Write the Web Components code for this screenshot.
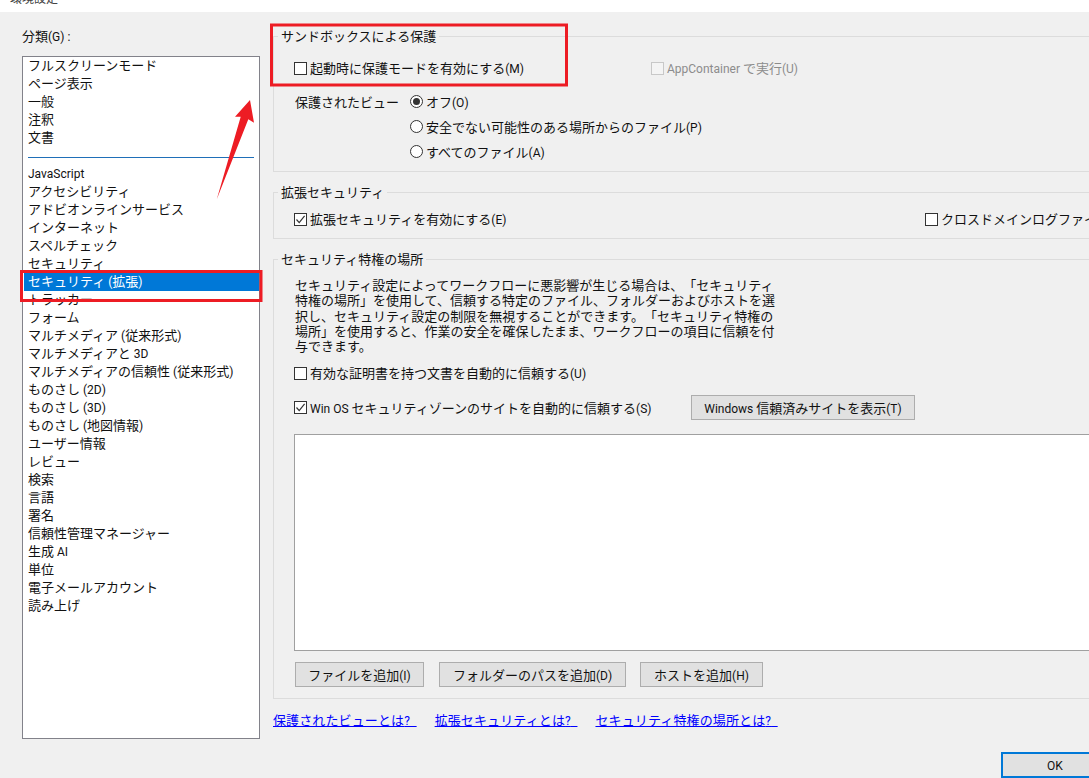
<!DOCTYPE html>
<html lang="ja">
<head>
<meta charset="utf-8">
<title>環境設定</title>
<style>
  html, body {
    margin: 0;
    height: 100%;
    overflow: hidden;
    background: #f0f0f0;
    color: #111;
    font: 13px/18px "Noto Sans CJK JP", sans-serif;
    text-spacing-trim: space-all;
  }
</style>
</head>
<body>

<pref-window heading="環境設定">
  <category-list label="分類(G) :" slot="side"></category-list>

  <group-box heading="サンドボックスによる保護" height="145">
    <div style="display:flex;margin-top:14px;height:18px">
      <check-box style="width:357px">起動時に保護モードを有効にする(M)</check-box>
      <check-box disabled>AppContainer で実行(U)</check-box>
    </div>
    <div style="display:flex;margin-top:16px">
      <span style="width:115px">保護されたビュー</span>
      <div style="display:grid;grid-auto-rows:25px;margin-top:-4px;align-items:center">
        <radio-button checked>オフ(O)</radio-button>
        <radio-button>安全でない可能性のある場所からのファイル(P)</radio-button>
        <radio-button>すべてのファイル(A)</radio-button>
      </div>
    </div>
  </group-box>

  <group-box heading="拡張セキュリティ" height="56">
    <div style="display:flex;margin-top:9px;height:18px">
      <check-box checked style="width:631px">拡張セキュリティを有効にする(E)</check-box>
      <check-box>クロスドメインログファイルを作成</check-box>
    </div>
  </group-box>

  <group-box heading="セキュリティ特権の場所" height="449">
    <div style="margin-top:9px;line-height:15.3px;white-space:nowrap">
      セキュリティ設定によってワークフローに悪影響が生じる場合は、「セキュリティ<br>
      特権の場所」を使用して、信頼する特定のファイル、フォルダーおよびホストを選<br>
      択し、セキュリティ設定の制限を無視することができます。「セキュリティ特権の<br>
      場所」を使用すると、作業の安全を確保したまま、ワークフローの項目に信頼を付<br>
      与できます。
    </div>
    <check-box style="margin-top:11px">有効な証明書を持つ文書を自動的に信頼する(U)</check-box>
    <div style="display:flex;align-items:center;margin-top:13px;height:25px">
      <check-box checked style="width:396px">Win OS セキュリティゾーンのサイトを自動的に信頼する(S)</check-box>
      <push-button width="224">Windows 信頼済みサイトを表示(T)</push-button>
    </div>
    <div style="height:215px;margin:14px 0 11px -1px;background:#fff;border:1px solid #a0a0a0"></div>
    <div style="display:flex">
      <push-button width="129">ファイルを追加(I)</push-button>
      <push-button width="187" style="margin-left:15px">フォルダーのパスを追加(D)</push-button>
      <push-button width="123" style="margin-left:14px">ホストを追加(H)</push-button>
    </div>
  </group-box>

  <div style="display:flex;gap:18px;margin-top:12px;height:18px">
    <help-link>保護されたビューとは?&ensp;</help-link>
    <help-link>拡張セキュリティとは?&ensp;</help-link>
    <help-link>セキュリティ特権の場所とは?&ensp;</help-link>
  </div>

  <push-button slot="ok" width="108" height="26" primary>OK</push-button>

  <mark-up slot="overlay"></mark-up>
</pref-window>

<script>
const categoryItems = [
  "フルスクリーンモード", "ページ表示", "一般", "注釈", "文書", "-",
  "JavaScript", "アクセシビリティ", "アドビオンラインサービス", "インターネット",
  "スペルチェック", "セキュリティ", "セキュリティ (拡張)", "トラッカー", "フォーム",
  "マルチメディア (従来形式)", "マルチメディアと 3D", "マルチメディアの信頼性 (従来形式)",
  "ものさし (2D)", "ものさし (3D)", "ものさし (地図情報)", "ユーザー情報", "レビュー",
  "検索", "言語", "署名", "信頼性管理マネージャー", "生成 AI", "単位",
  "電子メールアカウント", "読み上げ"
];

// the dialog's latin glyphs are narrower than the CJK font's, so they get a smaller Roboto
const latinRuns = /[!-~]+(?: [!-~]+)*/g;
const latinStyle = `font:12px/1 Roboto,sans-serif`;
const wrapLatin = (text) => text.replace(latinRuns, (run) => `<span style="${latinStyle}">${run}</span>`);

function wrapLatinIn(root) {
  const walker = document.createTreeWalker(root, NodeFilter.SHOW_TEXT);
  const nodes = [];
  while (walker.nextNode()) {
    nodes.push(walker.currentNode);
  }
  nodes.forEach((node) => {
    if (node.data.search(latinRuns) === -1) {
      return;
    }
    const holder = document.createElement("span");
    holder.innerHTML = wrapLatin(node.data);
    node.replaceWith(...holder.childNodes);
  });
}

class PrefWindow extends HTMLElement {
  constructor(...args) {
    super(...args);
    this.attachShadow({ mode: "open" });
  }

  connectedCallback() {
    this.shadowRoot.innerHTML = `
      <style>
        :host { display: block; position: relative; width: 1089px; height: 778px; overflow: hidden; }
        .title { height: 12px; background: #fff; overflow: hidden; }
        .title span { display: block; margin: -11px 0 0 10px; font-size: 12px; line-height: 18px; color: #444; }
        .main { display: flex; height: 740px; padding-left: 22px; }
        .side { width: 238px; margin-right: 13px; flex: none; }
        .content { width: 840px; flex: none; padding-top: 15px; }
        .footer { position: absolute; left: 1001px; top: 752px; }
      </style>
      <div class="title"><span>${this.getAttribute("heading")}</span></div>
      <div class="main">
        <div class="side"><slot name="side"></slot></div>
        <div class="content"><slot></slot></div>
      </div>
      <div class="footer"><slot name="ok"></slot></div>
      <slot name="overlay"></slot>
    `;
  }
}

class CategoryList extends HTMLElement {
  constructor(...args) {
    super(...args);
    this.attachShadow({ mode: "open" });
  }

  connectedCallback() {
    const rows = categoryItems.map((item) => {
      if (item === "-") {
        return `<div class="sep"></div>`;
      }
      const on = item === "セキュリティ (拡張)" ? " on" : "";
      return `<div class="item${on}">${wrapLatin(item)}</div>`;
    }).join("");

    this.shadowRoot.innerHTML = `
      <style>
        :host { display: block; }
        .label { height: 29px; padding-top: 15px; line-height: 18px; }
        .box { height: 681px; background: #fff; border: 1px solid #82828a; }
        .item { height: 18px; line-height: 16px; padding-left: 5px; white-space: nowrap; }
        .on { margin-left: 1px; padding-left: 4px; background: #0078d7; color: #fff; }
        .sep { height: 10px; margin: 0 5px 7px; border-bottom: 1px solid #1f6fb8; }
      </style>
      <div class="label">${wrapLatin(this.getAttribute("label"))}</div>
      <div class="box">${rows}</div>
    `;
  }
}

class GroupBox extends HTMLElement {
  constructor(...args) {
    super(...args);
    this.attachShadow({ mode: "open" });
  }

  connectedCallback() {
    this.shadowRoot.innerHTML = `
      <style>
        :host { display: block; margin-bottom: 11px; }
        fieldset {
          box-sizing: border-box;
          height: ${this.getAttribute("height")}px;
          margin: 0;
          padding: 0 0 0 21px;
          border: 1px solid #dcdcdc;
        }
        legend { padding: 0 3px; margin-left: -17px; line-height: 18px; }
      </style>
      <fieldset>
        <legend>${this.getAttribute("heading")}</legend>
        <slot></slot>
      </fieldset>
    `;
  }
}

class CheckBox extends HTMLElement {
  constructor(...args) {
    super(...args);
    this.attachShadow({ mode: "open" });
  }

  connectedCallback() {
    const disabled = this.hasAttribute("disabled");
    const tick = this.hasAttribute("checked")
      ? `<svg width="11" height="11" viewBox="0 0 11 11"><path d="M1.5 5.5 L4.2 8.6 L9.6 1.8" fill="none" stroke="#333" stroke-width="1.2"/></svg>`
      : "";
    this.shadowRoot.innerHTML = `
      <style>
        :host { display: flex; align-items: center; height: 18px; white-space: nowrap; flex: none; ${disabled ? "color: #8c8c8c;" : ""} }
        .mark {
          box-sizing: border-box; width: 13px; height: 13px; margin: 0 3px 0 -1px; flex: none;
          display: flex; background: ${disabled ? "#f4f4f4" : "#fff"};
          border: 1px solid ${disabled ? "#c8c8c8" : "#333"};
        }
      </style>
      <span class="mark">${tick}</span><span><slot></slot></span>
    `;
  }
}

class RadioButton extends HTMLElement {
  constructor(...args) {
    super(...args);
    this.attachShadow({ mode: "open" });
  }

  connectedCallback() {
    const dot = this.hasAttribute("checked") ? `<span class="dot"></span>` : "";
    this.shadowRoot.innerHTML = `
      <style>
        :host { display: flex; align-items: center; height: 18px; white-space: nowrap; }
        .mark {
          box-sizing: border-box; width: 13px; height: 13px; margin-right: 3px; flex: none;
          display: flex; align-items: center; justify-content: center;
          background: #fff; border: 1px solid #333; border-radius: 50%;
        }
        .dot { width: 7px; height: 7px; border-radius: 50%; background: #333; }
      </style>
      <span class="mark">${dot}</span><span><slot></slot></span>
    `;
  }
}

class PushButton extends HTMLElement {
  constructor(...args) {
    super(...args);
    this.attachShadow({ mode: "open" });
  }

  connectedCallback() {
    const primary = this.hasAttribute("primary");
    this.shadowRoot.innerHTML = `
      <style>
        :host {
          box-sizing: border-box; display: flex; align-items: center; justify-content: center; flex: none;
          width: ${this.getAttribute("width")}px;
          height: ${this.getAttribute("height") || 25}px;
          background: #e1e1e1;
          border: ${primary ? "2px solid #0078d7" : "1px solid #adadad"};
          white-space: nowrap;
        }
      </style>
      <span><slot></slot></span>
    `;
  }
}

class HelpLink extends HTMLElement {
  constructor(...args) {
    super(...args);
    this.attachShadow({ mode: "open" });
  }

  connectedCallback() {
    this.shadowRoot.innerHTML = `
      <style>
        :host { display: block; color: #0000ff; text-decoration: underline; white-space: nowrap; letter-spacing: .12px; }
      </style>
      <slot></slot>
    `;
  }
}

// red annotations somebody drew over the screenshot
class MarkUp extends HTMLElement {
  constructor(...args) {
    super(...args);
    this.attachShadow({ mode: "open" });
  }

  connectedCallback() {
    this.shadowRoot.innerHTML = `
      <style>
        :host { position: absolute; left: 0; top: 0; }
        svg { display: block; }
      </style>
      <svg width="1089" height="778" viewBox="0 0 1089 778">
        <rect x="271.5" y="25" width="295" height="60" fill="none" stroke="#ed1c24" stroke-width="3"/>
        <rect x="21.5" y="271.5" width="239.5" height="29" fill="none" stroke="#ed1c24" stroke-width="3"/>
        <path d="M250 100 L254 122.7 L248.3 119.3 L216.7 199.5 L240.7 116.7 L235 116.7 Z" fill="#ed1c24"/>
      </svg>
    `;
  }
}

wrapLatinIn(document.querySelector("pref-window"));

customElements.define("pref-window", PrefWindow);
customElements.define("category-list", CategoryList);
customElements.define("group-box", GroupBox);
customElements.define("check-box", CheckBox);
customElements.define("radio-button", RadioButton);
customElements.define("push-button", PushButton);
customElements.define("help-link", HelpLink);
customElements.define("mark-up", MarkUp);
</script>
</body>
</html>
